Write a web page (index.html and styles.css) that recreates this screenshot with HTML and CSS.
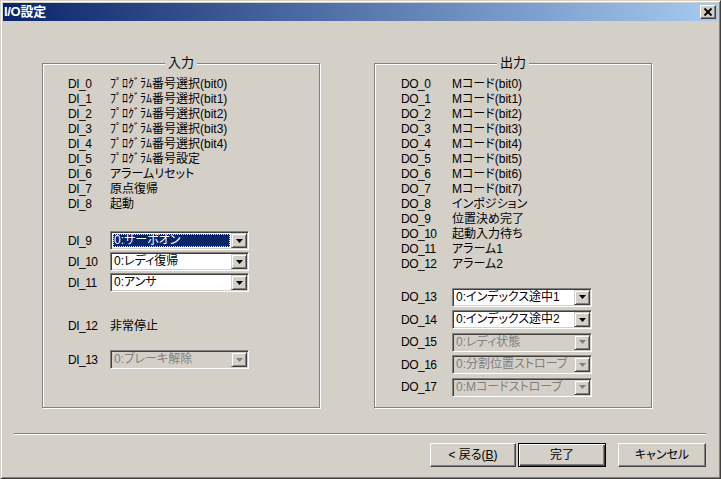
FILE: index.html
```html
<!DOCTYPE html>
<html lang="ja">
<head>
<meta charset="utf-8">
<title>I/O設定</title>
<link rel="stylesheet" href="styles.css">
</head>
<body>
<div class="window">
  <div class="titlebar">
    <span class="title">I/O設定</span>
    <span class="close"><svg width="14" height="12" viewBox="0 0 14 12"><path d="M3.5 2.5 L10.5 9.5 M10.5 2.5 L3.5 9.5" stroke="#000" stroke-width="1.8" fill="none"/></svg></span>
  </div>
  <div class="client">
    <div class="groups">
      <div class="group in">
        <div class="legend">入力</div>
        <div class="list">
          <div class="row"><span class="lbl">DI_0</span><span>ﾌﾟﾛｸﾞﾗﾑ番号選択(bit0)</span></div>
          <div class="row"><span class="lbl">DI_1</span><span>ﾌﾟﾛｸﾞﾗﾑ番号選択(bit1)</span></div>
          <div class="row"><span class="lbl">DI_2</span><span>ﾌﾟﾛｸﾞﾗﾑ番号選択(bit2)</span></div>
          <div class="row"><span class="lbl">DI_3</span><span>ﾌﾟﾛｸﾞﾗﾑ番号選択(bit3)</span></div>
          <div class="row"><span class="lbl">DI_4</span><span>ﾌﾟﾛｸﾞﾗﾑ番号選択(bit4)</span></div>
          <div class="row"><span class="lbl">DI_5</span><span>ﾌﾟﾛｸﾞﾗﾑ番号設定</span></div>
          <div class="row"><span class="lbl">DI_6</span><span>アラームリセット</span></div>
          <div class="row"><span class="lbl">DI_7</span><span>原点復帰</span></div>
          <div class="row"><span class="lbl">DI_8</span><span>起動</span></div>
        </div>
        <div class="clist in-c1">
          <div class="crow"><span class="lbl">DI_9</span><div class="combo"><span class="ctext sel">0:サーボオン</span><span class="cbtn"><svg width="7" height="4" viewBox="0 0 7 4"><path d="M0 0H7L3.5 4Z" fill="#000"/></svg></span></div></div>
          <div class="crow"><span class="lbl">DI_10</span><div class="combo"><span class="ctext">0:レディ復帰</span><span class="cbtn"><svg width="7" height="4" viewBox="0 0 7 4"><path d="M0 0H7L3.5 4Z" fill="#000"/></svg></span></div></div>
          <div class="crow"><span class="lbl">DI_11</span><div class="combo"><span class="ctext">0:アンサ</span><span class="cbtn"><svg width="7" height="4" viewBox="0 0 7 4"><path d="M0 0H7L3.5 4Z" fill="#000"/></svg></span></div></div>
        </div>
        <div class="row in-r12"><span class="lbl">DI_12</span><span>非常停止</span></div>
        <div class="clist in-c13">
          <div class="crow"><span class="lbl">DI_13</span><div class="combo dis"><span class="ctext">0:ブレーキ解除</span><span class="cbtn"><svg width="7" height="4" viewBox="0 0 7 4"><path d="M0 0H7L3.5 4Z" fill="#808080"/></svg></span></div></div>
        </div>
      </div>
      <div class="group out">
        <div class="legend">出力</div>
        <div class="list">
          <div class="row"><span class="lbl">DO_0</span><span>Mコード(bit0)</span></div>
          <div class="row"><span class="lbl">DO_1</span><span>Mコード(bit1)</span></div>
          <div class="row"><span class="lbl">DO_2</span><span>Mコード(bit2)</span></div>
          <div class="row"><span class="lbl">DO_3</span><span>Mコード(bit3)</span></div>
          <div class="row"><span class="lbl">DO_4</span><span>Mコード(bit4)</span></div>
          <div class="row"><span class="lbl">DO_5</span><span>Mコード(bit5)</span></div>
          <div class="row"><span class="lbl">DO_6</span><span>Mコード(bit6)</span></div>
          <div class="row"><span class="lbl">DO_7</span><span>Mコード(bit7)</span></div>
          <div class="row"><span class="lbl">DO_8</span><span>インポジション</span></div>
          <div class="row"><span class="lbl">DO_9</span><span>位置決め完了</span></div>
          <div class="row"><span class="lbl">DO_10</span><span>起動入力待ち</span></div>
          <div class="row"><span class="lbl">DO_11</span><span>アラーム1</span></div>
          <div class="row"><span class="lbl">DO_12</span><span>アラーム2</span></div>
        </div>
        <div class="clist out-c">
          <div class="crow wide"><span class="lbl">DO_13</span><div class="combo"><span class="ctext">0:インデックス途中1</span><span class="cbtn"><svg width="7" height="4" viewBox="0 0 7 4"><path d="M0 0H7L3.5 4Z" fill="#000"/></svg></span></div></div>
          <div class="crow wide"><span class="lbl">DO_14</span><div class="combo"><span class="ctext">0:インデックス途中2</span><span class="cbtn"><svg width="7" height="4" viewBox="0 0 7 4"><path d="M0 0H7L3.5 4Z" fill="#000"/></svg></span></div></div>
          <div class="crow wide"><span class="lbl">DO_15</span><div class="combo dis"><span class="ctext">0:レディ状態</span><span class="cbtn"><svg width="7" height="4" viewBox="0 0 7 4"><path d="M0 0H7L3.5 4Z" fill="#808080"/></svg></span></div></div>
          <div class="crow wide"><span class="lbl">DO_16</span><div class="combo dis"><span class="ctext">0:分割位置ストローブ</span><span class="cbtn"><svg width="7" height="4" viewBox="0 0 7 4"><path d="M0 0H7L3.5 4Z" fill="#808080"/></svg></span></div></div>
          <div class="crow wide"><span class="lbl">DO_17</span><div class="combo dis"><span class="ctext">0:Mコードストローブ</span><span class="cbtn"><svg width="7" height="4" viewBox="0 0 7 4"><path d="M0 0H7L3.5 4Z" fill="#808080"/></svg></span></div></div>
        </div>
      </div>
    </div>
    <div class="sep"></div>
    <div class="buttons">
      <button class="btn back">&lt; 戻る(<u>B</u>)</button>
      <button class="btn def">完了</button>
      <button class="btn cancel">キャンセル</button>
    </div>
  </div>
</div>
</body>
</html>
```

FILE: styles.css
```css
html, body {
  margin: 0;
  padding: 0;
  background: #d4d0c8;
}
body {
  font-family: "Liberation Sans", "Noto Sans CJK JP", sans-serif;
  font-size: 12px;
  color: #000;
  font-feature-settings: "palt";
}
.window {
  width: 721px;
  height: 479px;
  box-sizing: border-box;
  border: 1px solid;
  border-color: #d4d0c8 #404040 #404040 #d4d0c8;
  box-shadow: inset 1px 1px 0 #fff, inset -1px -1px 0 #808080;
  padding: 2px;
  background: #d4d0c8;
  display: flex;
  flex-direction: column;
}
.titlebar {
  height: 18px;
  background: linear-gradient(to right, #0a246a, #a6caf0);
  display: flex;
  align-items: center;
  justify-content: space-between;
  padding: 0 2px 0 1px;
}
.title {
  color: #fff;
  font-weight: bold;
  font-size: 13px;
  line-height: 18px;
  letter-spacing: -0.3px;
}
.close {
  width: 16px;
  height: 14px;
  box-sizing: border-box;
  background: #d4d0c8;
  border: 1px solid;
  border-color: #fff #404040 #404040 #fff;
  box-shadow: inset -1px -1px 0 #808080;
  display: flex;
  align-items: center;
  justify-content: center;
}
.close svg { display: block; }
.client {
  flex: 1;
  display: flex;
  flex-direction: column;
}
.groups {
  display: flex;
  gap: 54px;
  padding: 42px 0 0 39px;
}
.group {
  position: relative;
  width: 278px;
  height: 345px;
  box-sizing: border-box;
  border: 1px solid #808080;
  box-shadow: 1px 1px 0 #fff, inset 1px 1px 0 #fff;
  padding: 13px 0 0 25px;
}
.group.out { padding-left: 26px; }
.legend {
  position: absolute;
  top: -9px;
  left: 50%;
  transform: translateX(-50%);
  background: #d4d0c8;
  padding: 0 3px;
  line-height: 16px;
  font-size: 13px;
}
.row {
  display: flex;
  height: 15px;
  line-height: 15px;
  white-space: nowrap;
}
.lbl {
  width: 42px;
  flex: none;
  letter-spacing: -0.5px;
}
.out .lbl { width: 51px; }
.crow {
  display: flex;
  align-items: center;
  height: 21px;
}
.crow.wide { height: 22.5px; }
.in-c1 { margin-top: 18px; }
.in-r12 { margin-top: 26px; }
.in-c13 { margin-top: 15px; }
.out-c { margin-top: 14px; }
.combo {
  width: 139px;
  height: 19px;
  box-sizing: border-box;
  border: 1px solid;
  border-color: #808080 #fff #fff #808080;
  box-shadow: inset 1px 1px 0 #404040, inset -1px -1px 0 #d4d0c8;
  background: #fff;
  padding: 1px;
  display: flex;
}
.out .combo { width: 140px; }
.ctext {
  flex: 1;
  margin: 1px;
  padding-left: 1px;
  line-height: 13px;
  white-space: nowrap;
}
.ctext.sel {
  background: #0a246a;
  color: #fff;
  outline: 1px dotted #e8e0a0;
  outline-offset: -1px;
}
.cbtn {
  width: 16px;
  flex: none;
  box-sizing: border-box;
  background: #d4d0c8;
  border: 1px solid;
  border-color: #d4d0c8 #404040 #404040 #d4d0c8;
  box-shadow: inset 1px 1px 0 #fff, inset -1px -1px 0 #808080;
  display: flex;
  align-items: center;
  justify-content: center;
}
.cbtn svg { display: block; }
.combo.dis {
  background: #d4d0c8;
  color: #808080;
}
.sep {
  margin: 25px 12px 0 11px;
  height: 0;
  border-top: 1px solid #808080;
  border-bottom: 1px solid #fff;
}
.buttons {
  display: flex;
  justify-content: flex-end;
  padding: 8px 12px 0 0;
}
.btn {
  width: 88px;
  height: 24px;
  box-sizing: border-box;
  font-family: "Liberation Sans", "Noto Sans CJK JP", sans-serif;
  font-feature-settings: "palt";
  font-size: 12px;
  color: #000;
  background: #d4d0c8;
  border: 1px solid;
  border-color: #fff #404040 #404040 #fff;
  box-shadow: inset -1px -1px 0 #808080;
  padding: 0;
  line-height: 20px;
}
.btn.back { width: 86px; margin-right: 2px; }
.btn.def {
  border: 1px solid #000;
  box-shadow: inset 1px 1px 0 #fff, inset -1px -1px 0 #404040, inset -2px -2px 0 #808080;
  margin-right: 12px;
}
.btn u { text-decoration: underline; }
```
